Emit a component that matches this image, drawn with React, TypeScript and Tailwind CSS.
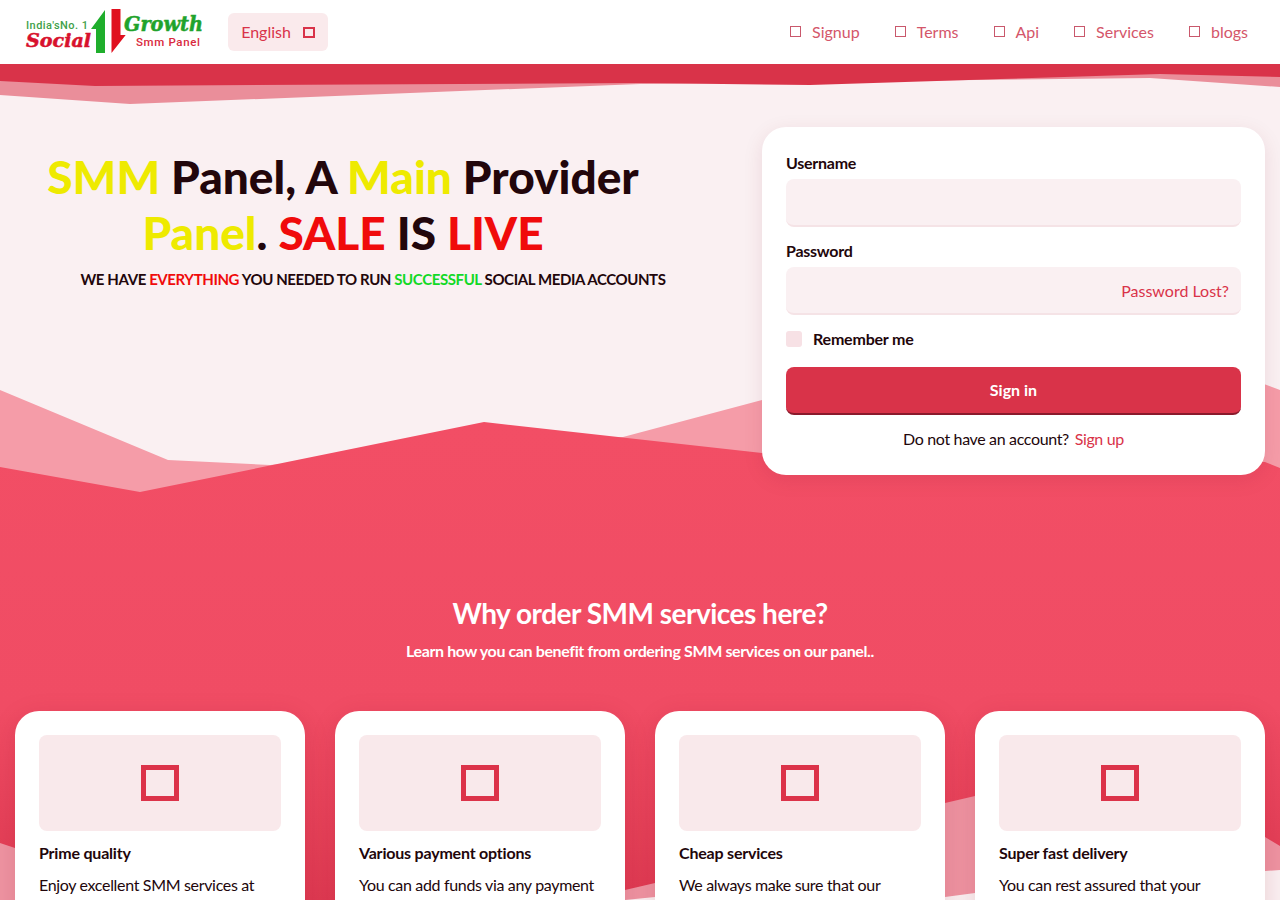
const features = [
  { title: 'Prime quality', text: 'Enjoy excellent SMM services at' },
  { title: 'Various payment options', text: 'You can add funds via any payment' },
  { title: 'Cheap services', text: 'We always make sure that our' },
  { title: 'Super fast delivery', text: 'You can rest assured that your' },
]

const navLinks = ['Signup', 'Terms', 'Api', 'Services', 'blogs']

function Logo() {
  return (
    <svg width="190" height="50" viewBox="20 8 190 50" className="block">
      <text x="26" y="30" fontFamily="Roboto, sans-serif" fontSize="11" fontWeight="500" fill="#3f9f4a" textLength="62">India'sNo. 1</text>
      <text x="26" y="48" fontFamily="'DejaVu Serif', serif" fontSize="18" fontWeight="700" fontStyle="italic" fill="#d8112d" stroke="#d8112d" strokeWidth="0.5" textLength="65" lengthAdjust="spacingAndGlyphs">Social</text>
      <polygon points="105,11 91,30 96,30 96,54 105,54" fill="#1fae2c" />
      <polygon points="111.5,10 120.5,10 120.5,36 125.7,36 111.5,54" fill="#e0101f" />
      <text x="124" y="32" fontFamily="'DejaVu Serif', serif" fontSize="20" fontWeight="700" fontStyle="italic" fill="#1fa32c" stroke="#1fa32c" strokeWidth="0.5" textLength="79" lengthAdjust="spacingAndGlyphs">Growth</text>
      <text x="136" y="47" fontFamily="Roboto, sans-serif" fontSize="11.5" fontWeight="500" fill="#d92a40" textLength="64">Smm Panel</text>
    </svg>
  )
}

function Backdrop() {
  return (
    <svg className="absolute left-0 top-0" width="1280" height="900" viewBox="0 0 1280 900">
      <defs>
        <linearGradient id="wave" x1="0" y1="422" x2="0" y2="900" gradientUnits="userSpaceOnUse">
          <stop offset="0" stopColor="#f24e65" />
          <stop offset="0.6" stopColor="#f04c64" />
          <stop offset="1" stopColor="#de3a52" />
        </linearGradient>
      </defs>
      {/* top band */}
      <polygon points="0,64 1280,64 1280,87 1150,78 640,84 130,104 0,95" fill="#ea8e9a" />
      <polygon points="0,64 1280,64 1280,77 1160,74 1000,79 810,85 640,83 95,86 0,81" fill="#d93349" />
      {/* hero waves */}
      <polygon points="0,390 168,460 270,465 623,437 762,400 1200,360 1280,390 1280,520 0,520" fill="#f59ca8" />
      <polygon points="0,467 140,492 484,422 762,453 1265,462 1280,468 1280,900 0,900" fill="url(#wave)" />
      {/* bottom waves */}
      <polygon points="0,843 15,848 300,940 625,890 655,883 945,803 975,796 1100,770 1265,837 1280,846 1280,900 0,900" fill="#ee94a2" />
      <polygon points="625,900 655,897 945,897 975,893 1280,870 1280,900" fill="#faf0f2" />
    </svg>
  )
}

export default function App() {
  return (
    <div className="relative h-[900px] w-[1280px] overflow-hidden bg-[#faf0f2] font-[Lato,sans-serif] text-[#22060b]">
      <Backdrop />

      <header className="relative flex h-16 items-center bg-white pl-5 pr-8">
        <Logo />
        <button className="ml-[18px] flex h-[38px] w-[100px] items-center justify-center gap-3 rounded-md bg-[#faeaec] text-base text-[#d93349]">
          English
          <span className="h-[11px] w-[12px] border-2 border-[#d93349]" />
        </button>
        <nav className="ml-auto flex items-center gap-[35px]">
          {navLinks.map((link) => (
            <a key={link} className="flex items-center gap-[11px] text-base text-[#d4566a]">
              <span className="mb-[1px] h-[11px] w-[11px] border-[1.5px] border-[#c9586c]" />
              {link}
            </a>
          ))}
        </nav>
      </header>

      <section className="relative flex items-start justify-between px-[15px] pt-[63px]">
        <div className="w-[716px] pt-[22px] text-center">
          <h1 className="pr-[60px] text-[46px] font-black leading-[56px]">
            <span className="text-[#eeea00]">SMM</span> Panel, A <span className="text-[#eeea00]">Main</span> Provider
            <br />
            <span className="text-[#eeea00]">Panel</span>. <span className="text-[#f00b0b]">SALE</span> IS <span className="text-[#f00b0b]">LIVE</span>
          </h1>
          <p className="mt-[6px] text-[15px] font-bold leading-6 tracking-[-0.4px]">
            WE HAVE <span className="text-[#f00b0b]">EVERYTHING</span> YOU NEEDED TO RUN <span className="text-[#12d926]">SUCCESSFUL</span> SOCIAL MEDIA ACCOUNTS
          </p>
        </div>

        <form className="h-[348px] w-[503px] rounded-3xl bg-white px-6 pt-6 shadow-[0_5px_20px_rgba(120,20,40,0.1)]">
          <label className="block text-base font-bold leading-6 tracking-[-0.25px]">Username</label>
          <div className="mt-[4px] h-12 rounded-lg border-b-2 border-[#f5e3e6] bg-[#faf0f2]" />
          <label className="mt-3 block text-base font-bold leading-6 tracking-[-0.25px]">Password</label>
          <div className="mt-[4px] flex h-12 items-center justify-end rounded-lg border-b-2 border-[#f5e3e6] bg-[#faf0f2] px-3 pt-[2px] text-base text-[#d93349]">
            Password Lost?
          </div>
          <div className="mt-4 flex h-4 items-center gap-[11px]">
            <span className="h-4 w-4 rounded-[3px] bg-[#f7e1e5]" />
            <span className="text-base font-bold tracking-[-0.2px]">Remember me</span>
          </div>
          <button type="button" className="mt-5 h-12 w-full rounded-lg border-b-2 border-[#8a1a2c] bg-[#d93349] text-base font-bold text-white">
            Sign in
          </button>
          <p className="mt-3 text-center text-base leading-6 tracking-[-0.35px]">
            Do not have an account? <a className="ml-[2px] text-[#d93349]">Sign up</a>
          </p>
        </form>
      </section>

      <section className="relative mt-[117px] text-center text-white">
        <h2 className="text-[28px] font-bold leading-[42px] tracking-[-0.5px]">Why order SMM services here?</h2>
        <p className="mt-[5px] text-base font-bold leading-6 tracking-[-0.38px]">Learn how you can benefit from ordering SMM services on our panel..</p>
      </section>

      <section className="relative mt-12 grid grid-cols-4 gap-[30px] px-[15px]">
        {features.map((f) => (
          <div key={f.title} className="h-[300px] rounded-3xl bg-white p-6 shadow-[0_5px_25px_rgba(150,20,40,0.15)]">
            <div className="flex h-24 items-center justify-center rounded-lg bg-[#f9e9eb]">
              <span className="h-[36px] w-[38px] border-[5px] border-[#dc3349]" />
            </div>
            <h3 className="mt-[10px] text-base font-bold leading-6 tracking-[-0.2px]">{f.title}</h3>
            <p className="mt-2 whitespace-nowrap text-base leading-6 tracking-[-0.33px]">{f.text}</p>
          </div>
        ))}
      </section>
    </div>
  )
}
